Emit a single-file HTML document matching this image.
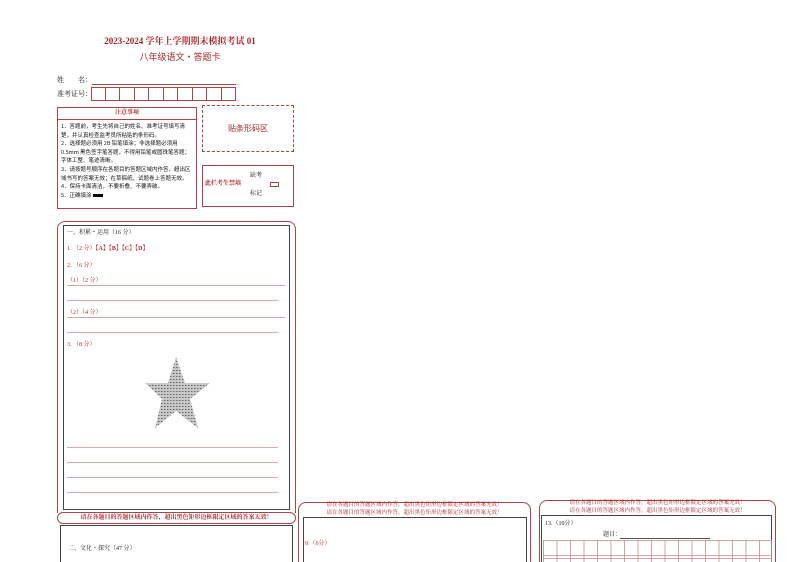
<!DOCTYPE html>
<html><head><meta charset="utf-8"><style>
*{margin:0;padding:0;box-sizing:border-box}
html,body{width:794px;height:562px;overflow:hidden}
body{background:#fff;position:relative;font-family:"Liberation Serif","Noto Serif CJK SC","Noto Sans CJK SC",serif;color:#222}
.a{position:absolute}
.r{color:#a8262b}
.t{font-size:6px;line-height:9px;white-space:nowrap}
.bx{border:1px solid #a8454a}
.ln{height:1px;background:#d9a9ab}
</style></head><body>
<div class="a r" style="left:60px;top:34px;width:240px;text-align:center;font-size:9px;font-weight:bold">2023-2024 学年上学期期末模拟考试 01</div>
<div class="a r" style="left:60px;top:50px;width:240px;text-align:center;font-size:9px;font-family:'Noto Sans CJK SC',sans-serif">八年级语文・答题卡</div>
<div class="a t" style="left:57px;top:76px;font-size:7px">姓　　名：</div>
<div class="a" style="left:92px;top:84px;width:144px;height:1px;background:#a8454a"></div>
<div class="a t" style="left:57px;top:90px;font-size:7px">准考证号：</div>
<div class="a" style="left:91px;top:87px;display:flex">
<div class="bx" style="width:14.5px;height:14px"></div><div class="bx" style="width:14.5px;height:14px;border-left:0"></div><div class="bx" style="width:14.5px;height:14px;border-left:0"></div><div class="bx" style="width:14.5px;height:14px;border-left:0"></div><div class="bx" style="width:14.5px;height:14px;border-left:0"></div><div class="bx" style="width:14.5px;height:14px;border-left:0"></div><div class="bx" style="width:14.5px;height:14px;border-left:0"></div><div class="bx" style="width:14.5px;height:14px;border-left:0"></div><div class="bx" style="width:14.5px;height:14px;border-left:0"></div><div class="bx" style="width:14.5px;height:14px;border-left:0"></div></div>
<div class="a bx" style="left:57px;top:107px;width:140px;height:102px">
<div class="r" style="height:12px;border-bottom:1px solid #a8454a;text-align:center;font-size:6px;line-height:11px;font-weight:bold">注意事项</div>
<div class="t" style="padding:2px 3px;white-space:normal;font-size:5.5px;line-height:8.6px;font-family:'Noto Sans CJK SC',sans-serif;color:#111">1．答题前，考生先将自己的姓名、准考证号填写清楚，并认真检查监考员所粘贴的条形码。<br>2．选择题必须用 2B 铅笔填涂；非选择题必须用 0.5mm 黑色签字笔答题，不得用铅笔或圆珠笔答题；字体工整、笔迹清晰。<br>3．请按题号顺序在各题目的答题区域内作答，超出区域书写的答案无效；在草稿纸、试题卷上答题无效。<br>4．保持卡面清洁，不要折叠、不要弄破。<br>5．正确填涂 <span style="display:inline-block;width:10px;height:3px;background:#000;vertical-align:middle"></span></div></div>
<div class="a r" style="left:202px;top:105px;width:92px;height:47px;border:1px dashed #a8454a;text-align:center;line-height:45px;font-size:8px;font-family:'Noto Sans CJK SC',sans-serif">贴条形码区</div>
<div class="a bx" style="left:202px;top:165px;width:92px;height:42px">
<div class="a t" style="left:47px;top:6px">缺考</div>
<div class="a t r" style="left:2px;top:14px;font-weight:bold">此栏考生禁填</div>
<div class="a bx" style="left:67px;top:16px;width:9px;height:5px"></div>
<div class="a t" style="left:47px;top:24px">标记</div></div>
<div class="a" style="left:57px;top:221px;width:239px;height:292px;border:1px solid #a8454a;border-radius:8px 8px 0 0;border-bottom:0"></div>
<div class="a" style="left:63px;top:225px;width:227px;height:285px;border:1px solid #444"></div>
<div class="a t" style="left:67px;top:229px">一、积累・运用（16 分）</div>
<div class="a t r" style="left:67px;top:245px">1．（2 分）<b>【A】【B】【C】【D】</b></div>
<div class="a t r" style="left:67px;top:262px">2．（6 分）</div>
<div class="a t r" style="left:67px;top:277px">（1）（2 分）</div>
<div class="a ln" style="left:67px;top:285px;width:218px"></div>
<div class="a ln" style="left:67px;top:300px;width:211px"></div>
<div class="a t r" style="left:67px;top:309px">（2）（4 分）</div>
<div class="a ln" style="left:67px;top:317px;width:218px"></div>
<div class="a ln" style="left:67px;top:332px;width:211px"></div>
<div class="a t r" style="left:67px;top:341px">3．（8 分）</div>
<svg class="a" style="left:140px;top:352px" width="75" height="80"><defs><pattern id="p" width="3" height="3" patternUnits="userSpaceOnUse"><rect width="3" height="3" fill="#c8c8c8"/><rect width="1.5" height="1" fill="#666"/></pattern></defs><polygon points="36,5 45,31 70,31 50,47 58,76 36,59 15,76 22,47 5,31 28,31" fill="url(#p)"/></svg>
<div class="a ln" style="left:67px;top:447px;width:211px"></div>
<div class="a ln" style="left:67px;top:462px;width:211px"></div>
<div class="a ln" style="left:67px;top:477px;width:211px"></div>
<div class="a ln" style="left:67px;top:492px;width:211px"></div>
<div class="a r" style="left:57px;top:512px;width:239px;height:12px;border:1px solid #a8454a;border-radius:8px;text-align:center;font-size:6px;line-height:10px;font-weight:bold">请在各题目的答题区域内作答，超出黑色矩形边框限定区域的答案无效！</div>
<div class="a" style="left:60px;top:525px;width:233px;height:37px;border:1px solid #444;border-bottom:0"></div>
<div class="a t" style="left:68px;top:545px">二、文化・探究（47 分）</div>
<div class="a" style="left:298px;top:502px;width:233px;height:60px;border:1px solid #a8454a;border-bottom:0;border-radius:8px 8px 0 0"></div>
<div class="a t r" style="left:298px;top:501px;width:233px;text-align:center;font-size:5.5px;line-height:8px">请在各题目的答题区域内作答，超出黑色矩形边框限定区域的答案无效！<br>请在各题目的答题区域内作答，超出黑色矩形边框限定区域的答案无效！</div>
<div class="a" style="left:303px;top:517px;width:224px;height:45px;border:1px solid #444;border-bottom:0"></div>
<div class="a t r" style="left:305px;top:540px">9.（6分）</div>
<div class="a" style="left:539px;top:500px;width:237px;height:62px;border:1px solid #a8454a;border-bottom:0;border-radius:8px 8px 0 0"></div>
<div class="a t r" style="left:539px;top:499px;width:237px;text-align:center;font-size:5.5px;line-height:8px">请在各题目的答题区域内作答，超出黑色矩形边框限定区域的答案无效！<br>请在各题目的答题区域内作答，超出黑色矩形边框限定区域的答案无效！</div>
<div class="a" style="left:541px;top:515px;width:231px;height:47px;border:1px solid #444;border-bottom:0"></div>
<div class="a t" style="left:545px;top:520px">13.（10分）</div>
<div class="a t" style="left:603px;top:531px">题目：</div>
<div class="a" style="left:620px;top:538px;width:90px;height:1px;background:#555"></div>
<svg class="a" style="left:543px;top:540px" width="229" height="22"><g stroke="#c98a8c" stroke-width="0.8" fill="none"><line x1="0" y1="0.5" x2="229" y2="0.5"/><line x1="0" y1="15.5" x2="229" y2="15.5"/><line x1="0" y1="18.5" x2="229" y2="18.5"/>
<path d="M0.5 0V22M14 0V22M27.5 0V22M41 0V22M54.5 0V22M68 0V22M81.5 0V22M95 0V22M108.5 0V22M122 0V22M135.5 0V22M149 0V22M162.5 0V22M176 0V22M189.5 0V22M203 0V22M216.5 0V22M228.5 0V22"/></g></svg>
</body></html>
